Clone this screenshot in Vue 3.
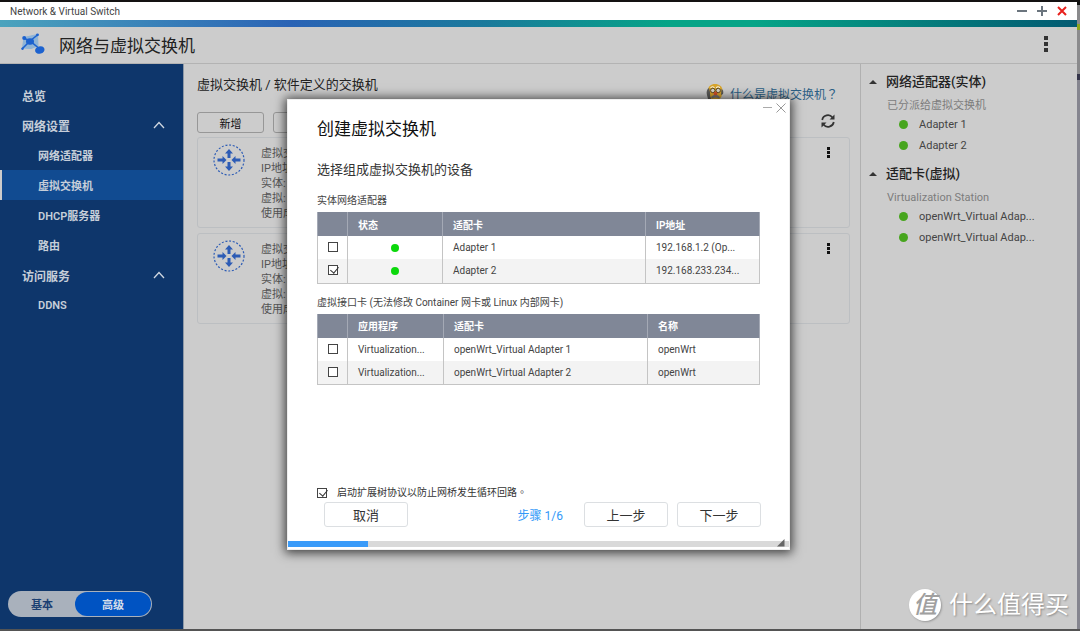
<script setup>
import { ref } from 'vue'

const nav = [
  { label: '总览', level: 1 },
  { label: '网络设置', level: 1, open: true },
  { label: '网络适配器', level: 2 },
  { label: '虚拟交换机', level: 2, active: true },
  { label: 'DHCP服务器', level: 2 },
  { label: '路由', level: 2 },
  { label: '访问服务', level: 1, open: true },
  { label: 'DDNS', level: 2 },
]

const switches = [
  ['虚拟交换机 1', 'IP地址:', '实体:', '虚拟:', '使用成员:'],
  ['虚拟交换机 2', 'IP地址:', '实体:', '虚拟:', '使用成员:'],
]

const groups = [
  { title: '网络适配器(实体)', sub: '已分派给虚拟交换机', items: ['Adapter 1', 'Adapter 2'] },
  { title: '适配卡(虚拟)', sub: 'Virtualization Station', items: ['openWrt_Virtual Adap...', 'openWrt_Virtual Adap...'] },
]

const physical = ref([
  { name: 'Adapter 1', ip: '192.168.1.2 (Op...', on: false },
  { name: 'Adapter 2', ip: '192.168.233.234...', on: true },
])

const virtual = ref([
  { app: 'Virtualization...', name: 'openWrt_Virtual Adapter 1', alias: 'openWrt', on: false },
  { app: 'Virtualization...', name: 'openWrt_Virtual Adapter 2', alias: 'openWrt', on: false },
])

const stp = ref(true)
</script>

<template>
  <div class="desktop">
    <div class="window">
      <div class="titlebar">
        <span>Network &amp; Virtual Switch</span>
        <div class="winbtns">
          <button aria-label="最小化"><svg width="10" height="10" viewBox="0 0 10 10"><path d="M0 5h10" stroke="#6b757e" stroke-width="2" /></svg></button>
          <button aria-label="最大化"><svg width="10" height="10" viewBox="0 0 10 10"><path d="M0 5h10M5 0v10" stroke="#6b757e" stroke-width="2" /></svg></button>
          <button aria-label="关闭"><svg width="10" height="10" viewBox="0 0 10 10"><path d="M1 1l8 8M9 1l-8 8" stroke="#e8201c" stroke-width="2" /></svg></button>
        </div>
      </div>
      <div class="stripe"></div>
      <header class="header">
        <svg class="logo" width="26" height="22" viewBox="0 0 26 22">
          <path d="M3 4.500L16.500 1.500L17 13L10 15.500L1.500 15z" fill="#8fb4d6" stroke="#8fb4d6" stroke-linejoin="round" />
          <path d="M1 16L9 8L17 1.500M2.500 5L9 8L20 17" fill="none" stroke="#1c62cf" stroke-width="1.600" />
          <ellipse cx="9" cy="8.500" rx="4" ry="3.300" fill="#1c62cf" />
          <circle cx="3.200" cy="5" r="2" fill="#1c62cf" />
          <circle cx="16.500" cy="1.800" r="1.400" fill="#1c62cf" />
          <circle cx="1.500" cy="15.700" r="1.200" fill="#1c62cf" />
          <ellipse cx="18.800" cy="17" rx="4.800" ry="3.700" fill="#1c62cf" transform="rotate(-15 18.800 17)" />
        </svg>
        <h1>网络与虚拟交换机</h1>
        <button class="more big" aria-label="更多"><i></i><i></i><i></i></button>
      </header>

      <div class="body">
        <nav class="side">
          <ul>
            <li v-for="n in nav" :key="n.label">
              <a href="#" :class="['lv' + n.level, { active: n.active }]">
                {{ n.label }}
                <svg v-if="n.open" width="12" height="8" viewBox="0 0 12 8"><path d="M1 7L6 1.500L11 7" fill="none" stroke="#cfd7e1" stroke-width="1.300" /></svg>
              </a>
            </li>
          </ul>
          <div class="toggle">
            <button>基本</button>
            <button class="on">高级</button>
          </div>
        </nav>

        <main class="main">
          <div class="crumbs">
            <h2>虚拟交换机 / 软件定义的交换机</h2>
            <a href="#" class="help">
              <svg width="18" height="18" viewBox="0 0 18 18">
                <path d="M2 7C2 2 5 0 9 0s7.500 2 7.500 7c0 6-3 10-7.500 10S2 13 2 7z" fill="#d8a52c" />
                <path d="M3 4C1 5 0 8 1 11q.5 4 2.500 6l2-1Q3.500 12 4 8z" fill="#5b5b59" />
                <path d="M15.500 5q2.500 1 1.500 5l-2 1z" fill="#5b5b59" />
                <path d="M4.500 3.500q2-1.500 4 0M10 3.500q2-1.500 4 0" fill="none" stroke="#fff" />
                <circle cx="6.800" cy="6.500" r="2.200" fill="#d9d4c5" stroke="#5d4a22" />
                <circle cx="12.200" cy="6.500" r="2.200" fill="#d9d4c5" stroke="#5d4a22" />
                <path d="M5 13q4.500-5 9 0l-1 1.500q-3.500-2-7 0z" fill="#777" />
                <circle cx="9.500" cy="9.500" r="1.900" fill="#d0502a" />
              </svg>
              什么是虚拟交换机？
            </a>
          </div>
          <div class="tools">
            <button class="tool">新增</button>
            <button class="tool">管理</button>
            <button class="refresh" aria-label="刷新">
              <svg width="14" height="14" viewBox="0 0 14 14">
                <path d="M1.200 6A5.800 5.800 0 0 1 11.500 3.500M12.800 8A5.800 5.800 0 0 1 2.500 10.500" fill="none" stroke="#333" stroke-width="1.700" />
                <path d="M13.500 .5v5H8.500zM.5 13.500v-5h5z" fill="#333" />
              </svg>
            </button>
          </div>
          <article v-for="(s, i) in switches" :key="i" class="card">
            <svg width="32" height="32" viewBox="0 0 32 32">
              <circle cx="16" cy="16" r="15" fill="none" stroke="#2d5cb5" stroke-width="1.200" stroke-dasharray="2 1.700" />
              <g fill="#2d5cb5">
                <path d="M16 5l4 4.500h-2.500V14h-3V9.500H12z" />
                <path d="M16 27l4-4.500h-2.500V18h-3v4.500H12z" />
                <path d="M13.500 16l-4-4v2.600H4.500v2.800h5V20z" />
                <path d="M18.500 16l4-4v2.600h5v2.800h-5V20z" />
              </g>
            </svg>
            <div class="info"><p v-for="l in s" :key="l">{{ l }}</p></div>
            <button class="more" aria-label="更多"><i></i><i></i><i></i></button>
          </article>
        </main>

        <aside class="panel">
          <section v-for="g in groups" :key="g.title">
            <h3>{{ g.title }}</h3>
            <h4>{{ g.sub }}</h4>
            <ul>
              <li v-for="(it, i) in g.items" :key="i">{{ it }}</li>
            </ul>
          </section>
        </aside>
      </div>

      <div class="overlay">
        <div class="dialog" role="dialog" aria-labelledby="dlg-title">
          <div class="dlgbtns">
            <button aria-label="最小化"><svg width="9" height="10" viewBox="0 0 9 10"><path d="M0 4.500h9" stroke="#aaa" /></svg></button>
            <button aria-label="关闭"><svg width="10" height="10" viewBox="0 0 10 10"><path d="M.5 .5l9 9M9.500 .5l-9 9" stroke="#999" /></svg></button>
          </div>
          <div class="content">
            <h2 id="dlg-title">创建虚拟交换机</h2>
            <h3>选择组成虚拟交换机的设备</h3>
            <table class="t1">
              <caption>实体网络适配器</caption>
              <colgroup><col class="c1"><col class="c2"><col class="c3"><col></colgroup>
              <thead><tr><th></th><th>状态</th><th>适配卡</th><th>IP地址</th></tr></thead>
              <tbody>
                <tr v-for="r in physical" :key="r.name">
                  <td class="tick"><input v-model="r.on" type="checkbox" :aria-label="r.name"></td>
                  <td class="state"><span class="dot"></span></td>
                  <td>{{ r.name }}</td>
                  <td>{{ r.ip }}</td>
                </tr>
              </tbody>
            </table>
            <table class="t2">
              <caption>虚拟接口卡 (无法修改 Container 网卡或 Linux 内部网卡)</caption>
              <colgroup><col class="c1"><col class="c2"><col class="c3"><col></colgroup>
              <thead><tr><th></th><th>应用程序</th><th>适配卡</th><th>名称</th></tr></thead>
              <tbody>
                <tr v-for="r in virtual" :key="r.name">
                  <td class="tick"><input v-model="r.on" type="checkbox" :aria-label="r.name"></td>
                  <td>{{ r.app }}</td>
                  <td>{{ r.name }}</td>
                  <td>{{ r.alias }}</td>
                </tr>
              </tbody>
            </table>
            <label class="stp"><input v-model="stp" type="checkbox">启动扩展树协议以防止网桥发生循环回路。</label>
          </div>
          <div class="actions">
            <button>取消</button>
            <span class="step">步骤 1/6</span>
            <button>上一步</button>
            <button>下一步</button>
          </div>
          <div class="progress"><div class="bar"></div>
            <svg width="8" height="8" viewBox="0 0 8 8"><path d="M7.500 0v7.500H0z" fill="#666" /></svg>
          </div>
        </div>
      </div>

      <div class="mark"><span class="seal">值</span><span>什么值得买</span></div>
    </div>
  </div>
</template>

<style>
body {
  margin: 0;
}
</style>

<style scoped>
* {
  box-sizing: border-box;
  margin: 0;
  padding: 0;
}
.desktop {
  height: 100vh;
  min-height: 600px;
  padding: 2px 3px 2px 0;
  background: linear-gradient(#111 0 5px, #8a8a8c 5px 24px, #8fa51c 24px 30px, #8a8a8c 30px 74px, #34344a 74px 80px, #85858f 80px);
  font-family: Roboto, "Noto Sans CJK SC", sans-serif;
  font-size: 11px;
  color: #333;
  box-shadow: inset 0 2px #141212, inset 0 -2px #545454;
}
button {
  font: inherit;
  color: inherit;
  border: 0;
  background: none;
  cursor: pointer;
}
a {
  text-decoration: none;
}
ul {
  list-style: none;
}
svg {
  display: block;
  flex: none;
}
.window {
  position: relative;
  height: 100%;
  display: flex;
  flex-direction: column;
  background: #ccc;
}
.titlebar {
  flex: none;
  height: 18px;
  display: flex;
  align-items: center;
  justify-content: space-between;
  padding: 0 10px;
  background: #fff;
  font-size: 10px;
  color: #444;
}
.winbtns {
  display: flex;
  gap: 10px;
}
.stripe {
  flex: none;
  height: 7px;
  background: linear-gradient(90deg, #4ba3bd, #2a63b5 27%, #1b7a9c 45%, #06a487 62%, #06a487 70%, #035a72);
}
.header {
  flex: none;
  height: 37px;
  display: flex;
  align-items: center;
  padding: 0 27px 2px 21px;
  border-bottom: 1px solid #b3b3b3;
}
.header h1 {
  flex: 1;
  margin-left: 12px;
  font-size: 17px;
  font-weight: 400;
  color: #222;
}
.more {
  display: flex;
  flex-direction: column;
  gap: 1px;
  padding: 0 2px;
}
.more i {
  width: 3px;
  height: 3px;
  background: #111;
}
.more.big {
  gap: 2px;
}
.more.big i {
  width: 4px;
  height: 4px;
  background: #333;
}
.body {
  flex: 1;
  display: flex;
  min-height: 0;
}
.side {
  flex: none;
  width: 184px;
  padding: 16px 0 12px;
  display: flex;
  flex-direction: column;
  justify-content: space-between;
  background: #0e366b;
  border-right: 1px solid #8d98a6;
}
.side a {
  display: flex;
  align-items: center;
  justify-content: space-between;
  height: 30px;
  padding-right: 18px;
  font-weight: 600;
  color: #c6ced9;
}
.side .lv1 {
  padding-left: 22px;
  font-size: 12px;
}
.side .lv2 {
  padding-left: 38px;
}
.side a.active {
  padding-left: 36px;
  border-left: 2px solid #ccc;
  background: #114b91;
}
.toggle {
  display: flex;
  width: 144px;
  height: 26px;
  margin-left: 8px;
  padding: 1px;
  border-radius: 13px;
  background: #a9b1bc;
}
.toggle button {
  flex: 1;
  font-weight: 600;
  color: #1b3f72;
}
.toggle .on {
  flex: none;
  width: 76px;
  border-radius: 12px;
  background: #0053c2;
  color: #d5deea;
}
.main {
  flex: 1;
  min-width: 0;
  padding: 11px 10px 0 13px;
}
.crumbs {
  display: flex;
  justify-content: space-between;
  height: 37px;
  padding-right: 10px;
}
.crumbs h2 {
  font-size: 13px;
  line-height: 20px;
  font-weight: 400;
  color: #222;
}
.help {
  display: flex;
  gap: 6px;
  align-items: center;
  align-self: flex-start;
  height: 36px;
  padding-right: 2px;
  font-family: Roboto, "Noto Sans CJK TC", sans-serif;
  font-size: 12px;
  color: #2b5f85;
}
.tools {
  display: flex;
  gap: 9px;
  align-items: flex-start;
  margin-bottom: 4px;
}
.tool {
  width: 67px;
  height: 21px;
  border: 1px solid #979797;
  border-radius: 3px;
  color: #111;
}
.refresh {
  margin: 2px 15px 0 auto;
}
.card {
  display: flex;
  align-items: flex-start;
  height: 91px;
  margin-bottom: 5px;
  padding: 6px 17px 0 15px;
  border: 1px solid #bcbfc2;
  border-radius: 3px;
}
.card .info {
  flex: 1;
  margin: 2px 0 0 16px;
  line-height: 15px;
  color: #555;
}
.card .more {
  margin-top: 3px;
}
.panel {
  flex: none;
  width: 217px;
  padding: 8px 0 0 25px;
  border-left: 1px solid #b0b0b0;
}
.panel section {
  margin-bottom: 8px;
}
.panel h3 {
  display: flex;
  align-items: center;
  gap: 9px;
  margin-left: -17px;
  font-size: 13px;
  line-height: 20px;
  font-weight: 500;
  color: #222;
}
.panel h3::before {
  content: "";
  border: 4px solid transparent;
  border-top: 0;
  border-bottom-color: #333;
}
.panel h4 {
  margin-top: 6px;
  padding-left: 1px;
  font-size: 11px;
  line-height: 16px;
  font-weight: 400;
  color: #7c7c7c;
}
.panel li {
  display: flex;
  align-items: center;
  gap: 11px;
  height: 21px;
  padding-left: 13px;
  color: #444;
}
.panel li::before {
  content: "";
  width: 9px;
  height: 9px;
  border-radius: 50%;
  background: #47a51e;
}
.overlay {
  position: absolute;
  inset: 18px 0 0;
  display: flex;
  align-items: center;
  justify-content: center;
}
.dialog {
  position: relative;
  width: 503px;
  max-width: 94%;
  border: 1px solid #eee;
  background: #fff;
  box-shadow: 0 1px 10px 2px rgba(0, 0, 0, 0.7);
}
.dlgbtns {
  position: absolute;
  top: 3px;
  right: 3px;
  display: flex;
  gap: 4px;
}
.content {
  padding: 18px 29px 0;
}
.content h2 {
  font-size: 17px;
  line-height: 22px;
  font-weight: 400;
  color: #111;
}
.content h3 {
  margin: 20px 0 12px;
  font-size: 13px;
  line-height: 20px;
  font-weight: 400;
  color: #333;
}
table {
  width: 100%;
  table-layout: fixed;
  border-collapse: collapse;
  font-size: 10px;
  color: #444;
}
caption {
  padding-bottom: 2px;
  line-height: 18px;
  text-align: left;
  white-space: nowrap;
  color: #444;
}
.t1 {
  margin-bottom: 10px;
}
.c1 {
  width: 30px;
}
.c2 {
  width: 95px;
}
.c3 {
  width: 203px;
}
.t2 .c2 {
  width: 96px;
}
.t2 .c3 {
  width: 204px;
}
th,
td {
  padding: 0 10px;
  border: solid #c4c4c4;
  border-width: 0 1px;
  text-align: left;
  white-space: nowrap;
}
th {
  height: 24px;
  background: #808797;
  border-color: #a4a9b5;
  color: #fff;
  font-weight: 600;
}
td {
  height: 23px;
}
tbody {
  border-bottom: 1px solid #c4c4c4;
}
tbody tr:last-child {
  background: #f3f3f3;
}
tbody tr:last-child td {
  height: 24px;
}
.tick {
  vertical-align: top;
}
input {
  appearance: none;
  display: block;
  flex: none;
  position: relative;
  width: 10px;
  height: 10px;
  border: 1px solid #444;
  background: #fff;
}
td input {
  margin-top: 6px;
}
input:checked::after {
  content: "";
  position: absolute;
  left: 3px;
  top: -1px;
  width: 4px;
  height: 7px;
  border: solid #333;
  border-width: 0 1px 1px 0;
  transform: rotate(40deg);
}
.dot {
  display: block;
  width: 8px;
  height: 8px;
  margin: 0 auto;
  border-radius: 50%;
  background: #0bd80b;
}
.stp {
  display: flex;
  align-items: center;
  gap: 10px;
  margin-top: 99px;
  font-family: Roboto, "Noto Sans CJK TC", sans-serif;
  font-size: 10px;
  line-height: 18px;
  color: #333;
}
.actions {
  display: flex;
  align-items: center;
  gap: 9px;
  padding: 0 28px 14px 36px;
  font-size: 13px;
}
.actions button {
  width: 84px;
  height: 25px;
  border: 1px solid #dcdfe2;
  border-radius: 3px;
}
.step {
  margin: 0 12px 0 auto;
  font-size: 12px;
  color: #3399f8;
}
.progress {
  display: flex;
  justify-content: space-between;
  height: 6px;
  margin-bottom: 2px;
  background: #d9d9d9;
}
.bar {
  width: 16%;
  background: #3a9bf9;
}
.progress svg {
  align-self: flex-end;
  margin-right: 4px;
}
.mark {
  position: absolute;
  right: 8px;
  bottom: 8px;
  display: flex;
  align-items: center;
  gap: 8px;
  font-size: 24px;
  line-height: 32px;
  color: #fff;
  text-shadow: 1px 1px 2px #888;
}
.seal {
  width: 32px;
  height: 32px;
  border-radius: 50%;
  background: #fff;
  box-shadow: 1px 1px 2px #999;
  text-align: center;
  font-style: oblique;
  font-weight: 500;
  color: #a0a0a0;
  text-shadow: none;
}
</style>
